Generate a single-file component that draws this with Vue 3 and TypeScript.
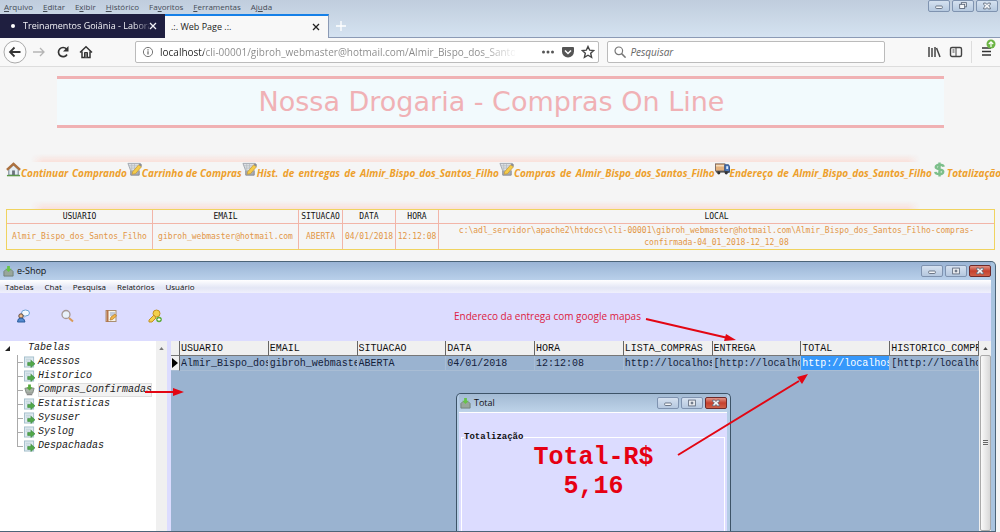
<script setup lang="ts">
import { ref } from 'vue'

interface NavLink { icon: 'home' | 'cart' | 'truck' | 'money'; label: string }

const browserMenus: [string, string, string][] = [
  ['', 'A', 'rquivo'],
  ['', 'E', 'ditar'],
  ['E', 'x', 'ibir'],
  ['', 'H', 'istórico'],
  ['Fa', 'v', 'oritos'],
  ['', 'F', 'erramentas'],
  ['Aj', 'u', 'da'],
]
const appMenus = ['Tabelas', 'Chat', 'Pesquisa', 'Relatórios', 'Usuário']

const address = ref('localhost/cli-00001/gibroh_webmaster@hotmail.com/Almir_Bispo_dos_Santos_F')
const search = ref('')

const links: NavLink[] = [
  { icon: 'home', label: 'Continuar \u200aComprando' },
  { icon: 'cart', label: 'Carrinho de Compras' },
  { icon: 'cart', label: 'Hist. \u2009de \u2009entregas \u2009de \u2009Almir_Bispo_dos_Santos_Filho' },
  { icon: 'cart', label: 'Compras \u2009de \u2009Almir_Bispo_dos_Santos_Filho' },
  { icon: 'truck', label: 'Endereço \u2009de \u2009Almir_Bispo_dos_Santos_Filho' },
  { icon: 'money', label: 'Totalização \u2009de' },
]

const orderHeads = ['USUARIO', 'EMAIL', 'SITUACAO', 'DATA', 'HORA', 'LOCAL']
const order = [
  'Almir_Bispo_dos_Santos_Filho',
  'gibroh_webmaster@hotmail.com',
  'ABERTA',
  '04/01/2018',
  '12:12:08',
  'c:\\adl_servidor\\apache2\\htdocs\\cli-00001\\gibroh_webmaster@hotmail.com\\Almir_Bispo_dos_Santos_Filho-compras-confirmada-04_01_2018-12_12_08',
]

const tree = ['Acessos', 'Historico', 'Compras_Confirmadas', 'Estatisticas', 'Sysuser', 'Syslog', 'Despachadas']
const selected = ref('Compras_Confirmadas')

const gridHeads = ['USUARIO', 'EMAIL', 'SITUACAO', 'DATA', 'HORA', 'LISTA_COMPRAS', 'ENTREGA', 'TOTAL', 'HISTORICO_COMPR']
const gridRow = [
  'Almir_Bispo_dos',
  'gibroh_webmaste',
  'ABERTA',
  '04/01/2018',
  '12:12:08',
  'http://localhos',
  '[http://localho',
  'http://localhos',
  '[http://localho',
]
</script>

<template>
  <div class="screen">
    <header class="browser">
      <div class="top">
        <nav class="menus">
          <button v-for="m in browserMenus" :key="m.join('')" type="button">{{ m[0] }}<u>{{ m[1] }}</u>{{ m[2] }}</button>
        </nav>
        <div class="winbtns">
          <button type="button" aria-label="Minimizar"><svg viewBox="0 0 22 12"><rect x="7" y="6" width="8" height="3" rx="1" /></svg></button>
          <button type="button" aria-label="Restaurar"><svg viewBox="0 0 22 12"><rect x="9" y="2" width="6" height="5" /><rect x="7" y="4" width="6" height="5" /></svg></button>
          <button type="button" aria-label="Fechar"><svg viewBox="0 0 22 12"><path d="M7 2.500h2.500L11 4.200l1.500-1.700H15v1.500L13 6l2 2v1.500h-2.500L11 7.800 9.500 9.500H7V8l2-2-2-2z" /></svg></button>
        </div>
      </div>
      <div class="tabs">
        <div class="tab dark">
          <i class="dot"></i><span class="fade">Treinamentos Goiânia - Labora</span>
          <button type="button" aria-label="Fechar aba"><svg viewBox="0 0 8 8"><path d="M1 1l6 6M7 1L1 7" /></svg></button>
        </div>
        <div class="tab active">
          <span>.:. Web Page .:.</span>
          <button type="button" aria-label="Fechar aba"><svg viewBox="0 0 8 8"><path d="M1 1l6 6M7 1L1 7" /></svg></button>
        </div>
        <button class="plus" type="button" aria-label="Nova aba"><svg viewBox="0 0 10 10"><path d="M5 0v10M0 5h10" /></svg></button>
      </div>
      <div class="toolbar">
        <button class="back" type="button" aria-label="Voltar"><svg viewBox="0 0 24 24"><circle cx="12" cy="12" r="11" fill="#fcfcfc" stroke="#aaa" /><path d="M17.500 12H7M11.500 7.500L7 12l4.500 4.500" fill="none" stroke="#333" stroke-width="1.800" /></svg></button>
        <button class="ic" type="button" aria-label="Avançar"><svg viewBox="0 0 14 14"><path d="M1 7h11M8 3l4 4-4 4" fill="none" stroke="#b5b5b5" stroke-width="1.300" /></svg></button>
        <button class="ic" type="button" aria-label="Recarregar"><svg viewBox="0 0 14 14"><path d="M11 9.500A4.600 4.600 0 1 1 10.500 4" fill="none" stroke="#333" stroke-width="1.700" /><path d="M12.500 1v5.500H7z" fill="#333" /></svg></button>
        <button class="ic" type="button" aria-label="Início"><svg viewBox="0 0 14 14"><path d="M1 7.500L7 1.800l6 5.700M3 6.500V12.500h8v-6" fill="none" stroke="#333" stroke-width="1.500" /><path d="M5.500 12.500V7.500h3v5" fill="#777" stroke="#333" /></svg></button>
        <div class="field url">
          <svg class="info" viewBox="0 0 12 12"><circle cx="6" cy="6" r="4.600" fill="none" stroke="#777" /><path d="M6 5.300v3.200M6 3.200v1.200" stroke="#666" stroke-width="1.200" /></svg>
          <input v-model="address" aria-label="Endereço" type="text" spellcheck="false" />
          <button class="ic" type="button" aria-label="Ações"><svg viewBox="0 0 14 14"><g fill="#555"><circle cx="2.500" cy="7" r="1.500" /><circle cx="7" cy="7" r="1.500" /><circle cx="11.500" cy="7" r="1.500" /></g></svg></button>
          <button class="ic" type="button" aria-label="Pocket"><svg viewBox="0 0 14 14"><path d="M2 2h10q1 0 1 1v3.500a6 6 0 0 1-12 0V3q0-1 1-1z" fill="#555" /><path d="M4 5.500l3 3 3-3" fill="none" stroke="#fff" stroke-width="1.500" /></svg></button>
          <button class="ic" type="button" aria-label="Favoritar"><svg viewBox="0 0 14 14"><path d="M7 1.500l1.700 3.700 4 .4-3 2.700.9 4L7 10.200l-3.600 2.100.9-4-3-2.700 4-.4z" fill="none" stroke="#444" stroke-width="1.400" /></svg></button>
        </div>
        <div class="field find">
          <svg class="info" viewBox="0 0 12 12"><circle cx="4.800" cy="4.800" r="3.800" fill="none" stroke="#777" stroke-width="1.200" /><path d="M7.600 7.600l4 4" stroke="#777" stroke-width="1.500" /></svg>
          <input v-model="search" aria-label="Pesquisar" type="text" placeholder="Pesquisar" />
        </div>
        <div class="right">
          <button class="ic" type="button" aria-label="Biblioteca"><svg viewBox="0 0 14 14"><path d="M2 2v10M5 3v9M8 2v10M9.500 3l3.500 9" fill="none" stroke="#444" stroke-width="1.500" /></svg></button>
          <button class="ic" type="button" aria-label="Painel"><svg viewBox="0 0 14 14"><rect x="1.500" y="2.500" width="11" height="9" rx="1.500" fill="none" stroke="#444" stroke-width="1.400" /><path d="M7 2.500v9M3.500 5h2M3.500 7h2" stroke="#444" /></svg></button>
          <i class="rule"></i>
          <button class="ic menu" type="button" aria-label="Abrir menu"><svg viewBox="0 0 16 20"><path d="M2 9h9M2 12.500h9M2 16h9" stroke="#333" stroke-width="1.500" /><circle cx="11" cy="5" r="4.500" fill="#6cb544" /><path d="M11 8V3M8.800 5L11 2.800 13.200 5" fill="none" stroke="#fff" stroke-width="1.200" /></svg></button>
        </div>
      </div>
    </header>

    <main class="page">
      <h1>Nossa Drogaria - Compras On Line</h1>
      <div class="glow first"></div>
      <nav class="links">
        <a v-for="l in links" :key="l.label" href="#">
          <svg v-if="l.icon === 'home'" viewBox="0 0 16 16"><path d="M3 8l5-5 5 5v6H3z" fill="#e4edf2" stroke="#678" /><path d="M1 8.500L8 2l7 6.500" fill="none" stroke="#ac713f" stroke-width="2.600" /><rect x="6.500" y="9" width="3" height="5" fill="#6b737c" /><path d="M1 14.500h14" stroke="#5b9848" stroke-width="1.500" /></svg>
          <svg v-else-if="l.icon === 'cart'" viewBox="0 0 16 16"><path d="M1 1.500h13l-3 8H4z" fill="#dcdfe3" stroke="#a2a7b0" /><path d="M2 4h10M3 6.500h8M5 2v7M8 2v7" stroke="#b3b8be" stroke-width=".7" /><path d="M4 9.500v4.500h9V9" fill="#a9adb3" stroke="#878b92" /><path d="M6 10.500L12.500 3l3 2L9 12.500l-3.500.500z" fill="#f5cc4a" stroke="#c69a3a" stroke-width=".8" /><path d="M12.500 3L14 1.300 16 3l-.8 2z" fill="#8a8d92" /></svg>
          <svg v-else-if="l.icon === 'truck'" viewBox="0 0 16 16"><rect x=".5" y="2" width="10" height="7.500" fill="#e5b27d" stroke="#7c6a60" /><path d="M1 4h9" stroke="#f6dfc0" stroke-width="1.500" /><path d="M10.500 3h4l1 2v6h-5z" fill="#4c78bd" stroke="#304d80" /><path d="M12 4.500h2v3h-2z" fill="#dceafa" /><path d="M1 10.500h14" stroke="#444" stroke-width="1.500" /><circle cx="4" cy="11.500" r="1.700" fill="#333" /><circle cx="12" cy="11.500" r="1.700" fill="#333" /></svg>
          <svg v-else viewBox="0 0 16 16"><path d="M12.500 5C12 2.500 4 2 4 5.300 4 8.500 12 7 12 10.500 12 14 4 13.500 3.500 10.500M8 .5v15" fill="none" stroke="#7cbf8b" stroke-width="2.600" /></svg>
          <span>{{ l.label }}</span>
        </a>
      </nav>
      <div class="glow second"></div>
      <table class="order">
        <colgroup><col class="c1" /><col class="c1" /><col class="c2" /><col class="c3" /><col class="c4" /><col /></colgroup>
        <thead><tr><th v-for="h in orderHeads" :key="h" scope="col">{{ h }}</th></tr></thead>
        <tbody><tr><td v-for="c in order" :key="c">{{ c }}</td></tr></tbody>
      </table>
    </main>

    <section class="app" aria-label="e-Shop">
      <div class="titlebar">
        <svg class="appicon" viewBox="0 0 12 12"><path d="M1 6l2-2h6l2 2v5H1z" fill="#98a69b" stroke="#72807a" /><path d="M4.500 0h3v3H9.500L6 6.500 2.500 3h2z" fill="#66c447" /></svg>
        <h2>e-Shop</h2>
        <div class="winbtns">
          <button type="button" aria-label="Minimizar"><svg viewBox="0 0 22 12"><rect x="7" y="6" width="8" height="3" rx="1" /></svg></button>
          <button type="button" aria-label="Maximizar"><svg viewBox="0 0 22 12"><rect x="7" y="2.500" width="8" height="7" /><rect x="10" y="5" width="2" height="2" /></svg></button>
          <button type="button" class="close" aria-label="Fechar"><svg viewBox="0 0 22 12"><path d="M7 2.500h2.500L11 4.200l1.500-1.700H15v1.500L13 6l2 2v1.500h-2.500L11 7.800 9.500 9.500H7V8l2-2-2-2z" /></svg></button>
        </div>
      </div>
      <div class="client">
        <nav class="appmenu"><button v-for="m in appMenus" :key="m" type="button">{{ m }}</button></nav>
        <div class="apptools">
          <button type="button" aria-label="Chat"><svg viewBox="0 0 14 14"><ellipse cx="9.500" cy="4" rx="4" ry="3" fill="#f2f9ff" stroke="#6ba2d4" /><path d="M8 6.500v2l2-2" fill="#f2f9ff" stroke="#6ba2d4" stroke-width=".7" /><circle cx="5" cy="7" r="2.200" fill="#eebc8c" stroke="#624b3d" /><path d="M1.500 13q0-4 3.500-4t4 4z" fill="#538bd0" stroke="#2d5c9c" /></svg></button>
          <button type="button" aria-label="Pesquisar"><svg viewBox="0 0 14 14"><circle cx="6" cy="5.500" r="4" fill="#e8f1fa" stroke="#a59895" stroke-width="1.300" /><path d="M9 9l4 3.500" stroke="#d99a57" stroke-width="2" /></svg></button>
          <button type="button" aria-label="Relatórios"><svg viewBox="0 0 14 14"><rect x="2" y="1.500" width="10" height="11" fill="#f6f3ea" stroke="#a98e70" /><path d="M3.500 1v12" stroke="#b57449" stroke-width="2" /><path d="M6 4h5M6 6h4" stroke="#8da2c5" /><path d="M6 11l1-3 4-3 1.500 2-4 3.500z" fill="#f1b445" stroke="#b07a30" stroke-width=".7" /></svg></button>
          <button type="button" aria-label="Usuário"><svg viewBox="0 0 14 14"><circle cx="8.500" cy="4.500" r="3.500" fill="#f3d04d" stroke="#c29125" /><path d="M6 6L1 11v2h3l4-4z" fill="#f3d04d" stroke="#c29125" /><circle cx="11" cy="10.500" r="2.800" fill="#5eac3a" /><path d="M11 9v3M9.500 10.500h3" stroke="#fff" /></svg></button>
        </div>
        <div class="panes">
          <aside class="treepane">
            <div class="tree">
              <button class="root" type="button"><svg viewBox="0 0 6 6"><path d="M6 0v6H0z" fill="#222" /></svg>Tabelas</button>
              <ul>
                <li v-for="t in tree" :key="t">
                  <button type="button" :class="{ on: t === selected }" @click="selected = t">
                    <svg v-if="t === 'Compras_Confirmadas'" viewBox="0 0 12 12"><path d="M1 4h10L9.500 9.500h-7z" fill="#aab3a9" stroke="#7b827c" /><path d="M3 11h6" stroke="#888" stroke-width="1.500" /><path d="M4.500 0h3v3h2L6 6.500 2.500 3h2z" fill="#55a83b" /></svg>
                    <svg v-else viewBox="0 0 12 12"><rect x=".5" y=".5" width="10" height="11" fill="#dfeaf0" stroke="#a2bdca" /><path d="M2 3h6M2 5h4" stroke="#bccfd7" /><path d="M4 6.500h3.500V4L12 8l-4.500 4V9.800H4z" fill="#52a84a" stroke="#34823a" stroke-width=".6" /></svg>
                    <span>{{ t }}</span>
                  </button>
                </li>
              </ul>
            </div>
            <div class="scroll"><svg viewBox="0 0 6 4"><path d="M0 4l3-4 3 4z" fill="#777" /></svg></div>
          </aside>
          <div class="gridpane">
            <table class="grid">
              <colgroup><col class="mark" /><col v-for="h in gridHeads" :key="h" /></colgroup>
              <thead><tr><td></td><th v-for="h in gridHeads" :key="h" scope="col"><span>{{ h }}</span></th></tr></thead>
              <tbody>
                <tr>
                  <td class="cursor"><svg viewBox="0 0 6 10"><path d="M0 0l6 5-6 5z" /></svg></td>
                  <td v-for="(c, i) in gridRow" :key="i" :class="{ cur: i === 7 }"><span>{{ c }}</span></td>
                </tr>
              </tbody>
            </table>
            <div class="scroll wide">
              <svg viewBox="0 0 6 4"><path d="M0 4l3-4 3 4z" fill="#444" /></svg>
              <div class="thumb"><i></i></div>
            </div>
          </div>
        </div>
      </div>

      <section class="dialog" aria-label="Total">
        <div class="titlebar">
          <svg class="appicon" viewBox="0 0 12 12"><path d="M1 6l2-2h6l2 2v5H1z" fill="#98a69b" stroke="#72807a" /><path d="M4.500 0h3v3H9.500L6 6.500 2.500 3h2z" fill="#66c447" /></svg>
          <h2>Total</h2>
          <div class="winbtns">
            <button type="button" aria-label="Minimizar"><svg viewBox="0 0 22 12"><rect x="7" y="6" width="8" height="3" rx="1" /></svg></button>
            <button type="button" aria-label="Maximizar"><svg viewBox="0 0 22 12"><rect x="7" y="2.500" width="8" height="7" /><rect x="10" y="5" width="2" height="2" /></svg></button>
            <button type="button" class="close" aria-label="Fechar"><svg viewBox="0 0 22 12"><path d="M7 2.500h2.500L11 4.200l1.500-1.700H15v1.500L13 6l2 2v1.500h-2.500L11 7.800 9.500 9.500H7V8l2-2-2-2z" /></svg></button>
          </div>
        </div>
        <div class="dialogbody">
          <fieldset>
            <legend>Totalização</legend>
            <p>Total-R$<br />5,16</p>
          </fieldset>
        </div>
      </section>

      <p class="note">Endereco da entrega com google mapas</p>
      <svg class="arrows" width="996" height="272" viewBox="0 0 996 272" aria-hidden="true">
        <g stroke="#e30613" stroke-width="2" fill="none"><path d="M145 130H176M646 57L728 76M678 193L799 119" /></g>
        <g fill="#e30613"><path d="M184 130l-11-4v8zM736 78l-10-6-2 7zM808 112l-11 3 5 7z" /></g>
      </svg>
    </section>
  </div>
</template>

<style>
html, body { margin: 0; }
</style>

<style scoped>
.screen { height: 100vh; min-height: 532px; display: flex; flex-direction: column; overflow: hidden; background: #f5f5f5; font-family: "Open Sans", "Noto Sans", sans-serif; font-size: 9px; color: #222; }
.screen * { box-sizing: border-box; }
button { border: 0; padding: 0; margin: 0; background: none; font: inherit; color: inherit; }
svg { display: block; }
h1, h2, p, ul { margin: 0; padding: 0; font-weight: normal; }

.browser { flex: none; background: linear-gradient(#c0cddd, #d5e3f1 38px); }
.top { height: 14px; display: flex; justify-content: space-between; padding: 0 2px 0 4px; }
.menus { display: flex; gap: 10px; font-size: 8px; line-height: 12px; color: #444b55; }
.winbtns { display: flex; gap: 2px; margin-left: auto; }
.winbtns button { width: 22px; height: 12px; border: 1px solid #7f93b0; border-radius: 2px; background: linear-gradient(#d5e1f0, #b5c8df); }
.winbtns svg { width: 20px; height: 10px; fill: #f4f6f9; stroke: #566173; stroke-width: 1; }
.winbtns .close { background: linear-gradient(#e09488, #c6402d 50%, #cf6049); border-color: #6e2a2a; }

.tabs { height: 24px; display: flex; border-bottom: 1px solid #8b9ab5; }
.tab { display: flex; align-items: center; height: 24px; line-height: 24px; }
.tab button { margin-left: auto; }
.tab svg { width: 8px; height: 8px; fill: none; stroke: currentColor; stroke-width: 1.3; }
.tab span { white-space: nowrap; }
.dark { width: 165px; padding: 0 8px 0 11px; background: #1f1f40; color: #f2f2f6; }
.dot { width: 4px; height: 4px; border-radius: 2px; background: #fff; margin-right: 8px; flex: none; }
.fade { width: 126px; mask-image: linear-gradient(90deg, #000 110px, transparent 130px); }
.active { width: 164px; padding: 0 8px 0 6px; border-top: 2px solid #1580e8; background: #f8f8f8; border-right: 1px solid #8b9ab5; }
.plus { width: 10px; margin-left: 7px; }
.plus svg { width: 10px; height: 10px; stroke: #fff; stroke-width: 1.300; }

.toolbar { height: 29px; display: flex; align-items: center; background: #f8f8f8; border-bottom: 1px solid #ddd; padding: 0 2px 1px 3px; }
.ic { flex: none; width: 14px; height: 14px; }
.back { width: 24px; height: 24px; margin-right: 5px; }
.back + .ic { margin-right: 10px; }
.back + .ic + .ic { margin-right: 9px; }
.field { display: flex; align-items: center; height: 22px; border: 1px solid #bbb; border-radius: 2px; background: #fff; }
.field input { border: 0; outline: 0; padding: 0; background: none; font: inherit; min-width: 0; }
.info { width: 12px; height: 12px; flex: none; }
.url { flex: 454; margin-left: 42px; padding: 0 3px 0 6px; font-size: 10px; }
.url input { flex: 1; margin: 0 20px 0 6px; height: 16px; mask-image: linear-gradient(90deg, #000 320px, transparent 358px); background: linear-gradient(90deg, #222 44px, #888 44px); background-clip: text; -webkit-text-fill-color: transparent; }
.url .ic { margin-left: 6px; }
.find { flex: 264; margin-left: 8px; padding: 0 6px; font-size: 10px; }
.find input { flex: 1; margin-left: 4px; height: 16px; font-style: italic; }
.find input::placeholder { color: #666; opacity: 1; }
.right { display: flex; align-items: center; margin-left: 42px; gap: 8px; }
.rule { width: 1px; height: 22px; background: #ddd; }
.menu { width: 16px; height: 20px; margin: 0 2px 5px 0; }

.page { flex: none; padding: 9px 5px 11px 6px; }
h1 { margin: 0 51px; padding-right: 18px; border-top: 3px solid #f0b1b3; border-bottom: 3px solid #f0b1b3; background: #f2fafd; font-family: "DejaVu Sans", sans-serif; font-size: 27px; line-height: 46px; text-align: center; color: #f0b1b5; white-space: nowrap; }
.glow { height: 8px; margin: 0 75px 0 25px; background: linear-gradient(transparent, #f9e0da); mask-image: linear-gradient(90deg, transparent, #000 12px calc(100% - 12px), transparent); }
.first { margin-top: 26px; }
.links { display: flex; height: 18px; margin-right: -5px; overflow: hidden; font-size: 10px; font-weight: bold; font-style: italic; color: #eda02c; }
.links a { display: flex; flex: none; color: inherit; text-decoration: none; white-space: nowrap; line-height: 23px; }
.links svg { width: 15px; height: 15px; flex: none; }
.second { margin-top: 21px; }
.order { width: 100%; border-collapse: collapse; table-layout: fixed; outline: 1px solid #f0d35f; outline-offset: -1px; font-family: "DejaVu Sans Mono", monospace; font-size: 8px; line-height: 12px; text-align: center; }
.order th, .order td { border: 1px solid #f2b5a8; padding: 0; }
.order th { height: 14px; border-top-color: #f0d35f; font-weight: normal; color: #111; }
.order td { height: 26px; border-bottom-color: #f0d35f; color: #e29546; overflow-wrap: break-word; }
.c1 { width: 146px; } .c2 { width: 44px; } .c3 { width: 53px; } .c4 { width: 43px; }

.app { position: relative; flex: 1; min-height: 0; display: flex; flex-direction: column; margin-right: 4px; padding-right: 4px; border: solid #4c6478; border-width: 1px 1px 1px 0; border-radius: 0 5px 0 0; background: #a9c4df; }
.titlebar { flex: none; height: 18px; display: flex; align-items: center; background: linear-gradient(#9ab4d5, #b9d0ea); padding-left: 3px; }
.appicon { width: 11px; height: 11px; margin-right: 3px; }
h2 { font-size: 9px; line-height: 14px; color: #111; }
.client { flex: 1; min-height: 0; display: flex; flex-direction: column; background: #dcdcff; }
.appmenu { display: flex; gap: 11px; height: 13px; padding-left: 5px; font-size: 8px; line-height: 12px; color: #111; background: linear-gradient(#fff, #e3e6f5 60%, #f0f0fc); }
.apptools { display: flex; gap: 30px; height: 48px; align-items: center; padding: 0 16px 3px; }
.apptools svg { width: 14px; height: 14px; }
.panes { flex: 1; min-height: 0; display: flex; font-family: "Liberation Mono", monospace; font-size: 10px; }
.treepane { width: 167px; margin-right: 4px; display: flex; background: #fff; }
.tree { flex: 1; font-style: italic; line-height: 14px; }
.root { display: flex; align-items: center; gap: 18px; padding-left: 5px; height: 14px; }
.root svg { width: 5px; height: 5px; }
ul { list-style: none; margin-left: 17px; }
li { position: relative; height: 14px; padding-left: 7px; }
li::before { content: ""; position: absolute; left: 0; top: 0; width: 5px; height: 7px; border: solid #aaa; border-width: 0 0 1px 1px; }
li:not(:last-child)::after { content: ""; position: absolute; left: 0; top: 7px; height: 7px; border-left: 1px solid #aaa; }
li button { display: flex; align-items: center; gap: 3px; height: 14px; }
li svg { width: 11px; height: 12px; }
li .on span { background: #f2f2f2; outline: 1px solid #ddd; outline-offset: -1px; }
.scroll { width: 11px; background: #f0f0f0; display: flex; flex-direction: column; align-items: center; padding-top: 6px; }
.scroll svg { width: 5px; height: 3px; flex: none; }
.gridpane { flex: 1; min-width: 0; display: flex; align-items: stretch; background: #9ab3d0; }
.grid { flex: 1; width: 0; height: 30px; border-collapse: separate; border-spacing: 0; table-layout: fixed; line-height: 13px; white-space: nowrap; }
.grid td, .grid th { height: 15px; overflow: hidden; padding: 0 0 0 1px; text-align: left; font-weight: normal; color: #14213a; }
.grid span { display: block; overflow: hidden; }
.grid thead td, .grid th { background: #f0f0f0; border-right: 1px solid #666; border-bottom: 1px solid #777; color: #111; }
.grid tbody td { border-right: 1px solid #a9bdd4; border-bottom: 1px solid #a9bdd4; }
.mark { width: 9px; }
.grid tbody .cursor { background: #f0f0f0; padding: 0 0 0 1px; border-right: 1px solid #666; }
.cursor svg { width: 6px; height: 10px; }
.grid tbody .cur { background: #3698fb; color: #fff; }
.wide { width: 12px; }
.thumb { width: 11px; flex: 1; margin-top: 5px; border: 1px solid #aaa; border-radius: 2px; background: linear-gradient(90deg, #fafafa, #d8d8d8); display: flex; align-items: center; justify-content: center; }
.thumb i { width: 5px; height: 6px; background: repeating-linear-gradient(#666 0 1px, #eee 1px 2px); }

.dialog { position: absolute; left: 456px; top: 131px; bottom: 0; width: 275px; display: flex; flex-direction: column; border: 1px solid #3e5468; border-bottom: 0; border-radius: 5px 5px 0 0; background: #b5cde6; padding: 0 3px 0 2px; overflow: hidden; }
.dialog .titlebar { background: linear-gradient(#a3bad3, #bed3e9); padding-left: 1px; }
.dialogbody { flex: 1; background: #dcdcff; border-top: 1px solid #fff; padding: 18px 2px 0; }
fieldset { margin: 0; border: 1px solid #fff; border-bottom: 0; padding: 0 0 0 1px; height: 100%; min-width: 0; font-family: "Liberation Mono", monospace; font-weight: bold; }
legend { margin-left: 1px; padding: 0; font-size: 9px; line-height: 12px; color: #111; }
fieldset p { font-size: 25px; font-weight: bold; line-height: 29px; text-align: center; color: #e60012; }
.note { position: absolute; left: 454px; top: 47px; font-size: 10px; line-height: 14px; color: #dc2142; white-space: nowrap; }
.arrows { position: absolute; left: 0; top: 0; pointer-events: none; }
</style>
